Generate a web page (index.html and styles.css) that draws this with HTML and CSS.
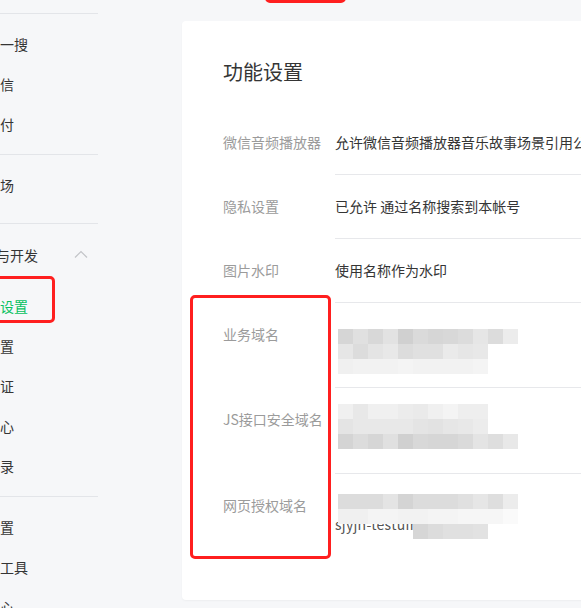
FILE: index.html
```html
<!DOCTYPE html>
<html lang="zh-CN">
<head>
<meta charset="utf-8">
<title>功能设置</title>
<link rel="stylesheet" href="styles.css">
</head>
<body>
<div class="page">
  <nav class="sidebar">
    <div class="sidebar-inner">
      <div class="group group-tail">
        <div class="item">投票管理</div>
      </div>
      <div class="group">
        <div class="item">微信搜一搜</div>
        <div class="item">用户私信</div>
        <div class="item">微信支付</div>
      </div>
      <div class="group group-single">
        <div class="item">服务市场</div>
      </div>
      <div class="group">
        <div class="group-head">
          <span class="head-text">设置与开发</span>
          <svg class="chevron" width="14" height="8" viewBox="0 0 14 8"><polyline points="1,7.5 7,1.5 13,7.5" fill="none" stroke="#c2c4c8" stroke-width="1.2"/></svg>
        </div>
        <div class="item active">公众号设置</div>
        <div class="item">人员设置</div>
        <div class="item">微信认证</div>
        <div class="item">安全中心</div>
        <div class="item">违规记录</div>
      </div>
      <div class="group">
        <div class="item">基本配置</div>
        <div class="item">开发者工具</div>
        <div class="item">运维中心</div>
      </div>
    </div>
  </nav>

  <main class="card">
    <h1 class="title">功能设置</h1>
    <div class="row">
      <div class="label">微信音频播放器</div>
      <div class="value nowrap">允许微信音频播放器音乐故事场景引用公众号的音频素材</div>
    </div>
    <div class="row">
      <div class="label">隐私设置</div>
      <div class="value">已允许 通过名称搜索到本帐号</div>
    </div>
    <div class="row">
      <div class="label">图片水印</div>
      <div class="value">使用名称作为水印</div>
    </div>
    <div class="row">
      <div class="label">业务域名</div>
      <div class="value blur-cell r4">
        <div class="pix">
          <span class="c-d6"></span><span class="c-e0"></span><span class="c-d8"></span><span class="c-e2"></span><span class="c-d0"></span><span class="c-da"></span><span class="c-d6"></span><span class="c-d8"></span><span class="c-dc"></span><span class="c-e6"></span><span class="c-dc"></span><span class="c-ec"></span>
          <span class="c-e6"></span><span class="c-dc"></span><span class="c-e4"></span><span class="c-e8"></span><span class="c-dc"></span><span class="c-e0"></span><span class="c-e0"></span><span class="c-ea"></span><span class="c-e6"></span><span class="c-e8"></span><span></span><span></span>
          <span class="c-f0"></span><span class="c-f2"></span><span class="c-f2"></span><span class="c-f2"></span><span class="c-f4"></span><span class="c-f2"></span><span class="c-f2"></span><span class="c-f2"></span><span class="c-f2"></span><span class="c-f4"></span><span></span><span></span>
        </div>
      </div>
    </div>
    <div class="row">
      <div class="label">JS接口安全域名</div>
      <div class="value blur-cell r5">
        <div class="pix">
          <span class="c-f0"></span><span class="c-e8"></span><span class="c-f0"></span><span class="c-f0"></span><span class="c-ec"></span><span class="c-ea"></span><span class="c-f0"></span><span class="c-f4"></span><span class="c-ee"></span><span class="c-ee"></span><span></span><span></span>
          <span class="c-e4"></span><span class="c-e8"></span><span class="c-e8"></span><span class="c-e8"></span><span class="c-e8"></span><span class="c-e4"></span><span class="c-e2"></span><span class="c-e6"></span><span class="c-e8"></span><span class="c-ec"></span><span></span><span></span>
          <span class="c-d4"></span><span class="c-dc"></span><span class="c-d6"></span><span class="c-e0"></span><span class="c-d0"></span><span class="c-d8"></span><span class="c-d6"></span><span class="c-d6"></span><span class="c-da"></span><span class="c-e4"></span><span class="c-de"></span><span class="c-e8"></span>
        </div>
      </div>
    </div>
    <div class="row last">
      <div class="label">网页授权域名</div>
      <div class="value blur-cell r6">
        <div class="pix">
          <span class="c-dc"></span><span class="c-dc"></span><span class="c-dc"></span><span class="c-e4"></span><span class="c-d4"></span><span class="c-dc"></span><span class="c-dc"></span><span class="c-dc"></span><span class="c-e0"></span><span class="c-e6"></span><span class="c-de"></span><span class="c-ec"></span>
          <span class="c-f0"></span><span class="c-f0"></span><span class="c-f4"></span><span class="c-f4"></span><span class="c-f2"></span><span class="c-f2"></span><span class="c-f4"></span><span class="c-f4"></span><span class="c-f6"></span><span class="c-f6"></span><span class="c-f6"></span><span class="c-fa"></span>
          <span class="pix-text">sjyjn-testuin</span><span class="c-d6 col6"></span><span class="c-dc"></span><span class="c-e0"></span><span class="c-e0"></span><span class="c-e2"></span>
        </div>
      </div>
    </div>
  </main>

  <div class="mark mark-top"></div>
  <div class="mark mark-side"></div>
  <div class="mark mark-card"></div>
</div>
</body>
</html>
```

FILE: styles.css
```css
html, body {
  margin: 0;
  padding: 0;
}
body {
  background: #f6f7f9;
  overflow: hidden;
  font-family: "Noto Sans CJK SC", "Noto Sans", sans-serif;
  color: #353535;
  font-size: 14px;
}
.page {
  position: relative;
  width: 581px;
  height: 608px;
  overflow: hidden;
  display: flex;
  align-items: flex-start;
}

/* sidebar */
.sidebar {
  width: 98px;
  flex-shrink: 0;
  overflow: hidden;
  margin-top: -37px;
}
.sidebar-inner {
  margin-left: -42px;
}
.group {
  padding: 10px 0;
  border-top: 1px solid #e3e5e9;
}
.group-tail {
  padding: 0 0 10px;
  border-top: none;
}
.group-single {
  padding: 10px 0 18px;
}
.item {
  height: 40px;
  line-height: 40px;
  white-space: nowrap;
  color: #353535;
}
.item.active {
  color: #07c160;
}
.group-head {
  height: 42px;
  margin: 0 10px 10px 10px;
  display: flex;
  align-items: center;
  justify-content: space-between;
  white-space: nowrap;
}
.head-text {
  font-size: 14px;
  color: #353535;
}
.chevron {
  display: block;
  margin-top: -2px;
}

/* card */
.card {
  flex-shrink: 0;
  margin: 21px 0 0 84px;
  width: 640px;
  height: 579px;
  box-sizing: border-box;
  padding: 37px 0 0 41px;
  background: #fff;
  border-radius: 4px;
  box-shadow: 0 1px 2px rgba(0, 0, 0, 0.04);
}
.title {
  margin: 0 0 25px;
  font-size: 20px;
  line-height: 28px;
  font-weight: normal;
  color: #353535;
}
.row {
  display: flex;
  align-items: flex-start;
}
.label {
  width: 112px;
  flex-shrink: 0;
  padding: 20px 0;
  line-height: 23px;
  color: #9b9b9b;
  white-space: nowrap;
}
.value {
  flex: 1;
  padding: 20px 0;
  line-height: 23px;
  border-bottom: 1px solid #e7e8eb;
  color: #353535;
}
.nowrap {
  white-space: nowrap;
  overflow: hidden;
}
.row.last .value {
  border-bottom: none;
}
.blur-cell {
  padding-left: 3px;
}
.r4 { padding-top: 26px; padding-bottom: 13px; }
.r5 { padding-top: 16px; padding-bottom: 24px; }
.r6 { padding-top: 20px; padding-bottom: 0; }

.pix {
  display: grid;
  grid-template-columns: repeat(12, 15px);
  grid-auto-rows: 15px;
  width: 180px;
}
.pix span {
  display: block;
  position: relative;
  z-index: 1;
}
.pix .pix-text {
  grid-column: 1 / 7;
  grid-row: 3;
  z-index: 0;
  line-height: 15px;
  font-size: 14px;
  letter-spacing: 0.3px;
  color: #555;
  white-space: nowrap;
  transform: translate(-3px, -7px);
}
.pix .col6 { grid-column: 6; grid-row: 3; }

.c-d0 { background: #d0d0d0; }
.c-d4 { background: #d4d4d4; }
.c-d6 { background: #d6d6d6; }
.c-d8 { background: #d8d8d8; }
.c-da { background: #dadada; }
.c-dc { background: #dcdcdc; }
.c-de { background: #dedede; }
.c-e0 { background: #e0e0e0; }
.c-e2 { background: #e2e2e2; }
.c-e4 { background: #e4e4e4; }
.c-e6 { background: #e6e6e6; }
.c-e8 { background: #e8e8e8; }
.c-ea { background: #eaeaea; }
.c-ec { background: #ececec; }
.c-ee { background: #eeeeee; }
.c-f0 { background: #f0f0f0; }
.c-f2 { background: #f2f2f2; }
.c-f4 { background: #f4f4f4; }
.c-f6 { background: #f6f6f6; }
.c-fa { background: #fafafa; }

/* red annotation boxes */
.mark {
  position: absolute;
  z-index: 5;
  border: 3px solid #ff1f1f;
  border-radius: 5px;
  box-sizing: border-box;
}
.mark-top {
  left: 265px;
  top: -30px;
  width: 81px;
  height: 33px;
}
.mark-side {
  left: -20px;
  top: 276px;
  width: 75px;
  height: 47px;
}
.mark-card {
  left: 190px;
  top: 295px;
  width: 141px;
  height: 264px;
}
```
